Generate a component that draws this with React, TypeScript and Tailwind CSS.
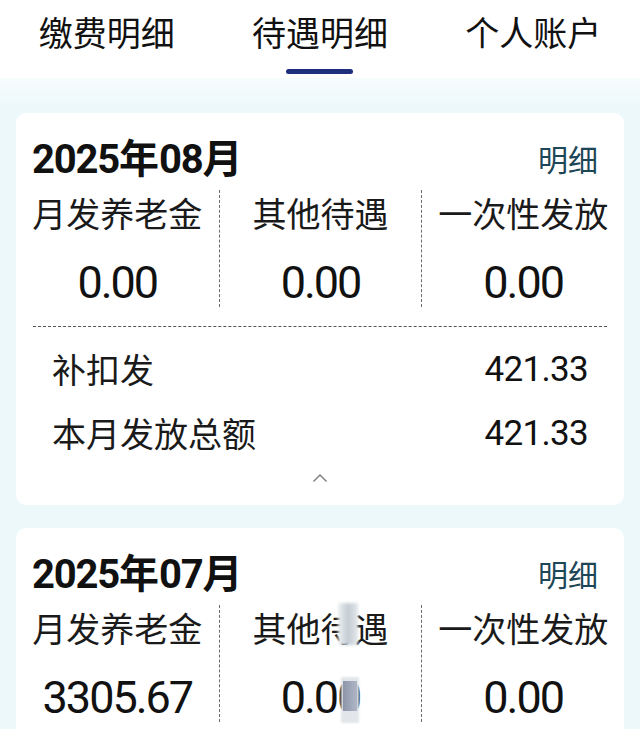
import React from "react";

const cjk = { fontFamily: '"Noto Sans CJK SC", "Noto Sans", sans-serif' };
const num = { fontFamily: 'Roboto, "Noto Sans CJK SC", sans-serif' };

function Chevron() {
  return (
    <svg width="16" height="10" viewBox="0 0 16 10" className="block">
      <polyline points="1.5,8.5 8,2 14.5,8.5" fill="none" stroke="#7a7a7a" strokeWidth="1.4" />
    </svg>
  );
}

type Col = { label: string; value: string };

function Card({
  title,
  cols,
  extra,
  blur,
}: {
  title: string;
  cols: Col[];
  extra?: boolean;
  blur?: boolean;
}) {
  return (
    <div className="mx-[16px] rounded-[10px] bg-white pt-[25px]">
      <div className="flex h-[40px] items-center justify-between pl-[16px] pr-[26px]">
        <span className="text-[40px] font-bold leading-none tracking-[-0.03em] text-[#111]" style={num}>
          2025<span style={cjk} className="tracking-normal">年</span>
          {title}
          <span style={cjk} className="tracking-normal">月</span>
        </span>
        <span className="text-[30px] leading-none text-[#1d4656]" style={cjk}>
          明细
        </span>
      </div>
      <div className="mt-[12px] grid grid-cols-3">
        {cols.map((c, i) => (
          <div
            key={i}
            className={
              "relative flex flex-col items-center " +
              (i > 0 ? "border-l border-dashed border-[#6b6b6b]" : "")
            }
          >
            <div className="mt-[3px] flex h-[40px] items-center text-[34px] leading-none text-[#1a1a1a]" style={cjk}>
              {c.label}
            </div>
            <div className="mt-[24px] flex h-[50px] items-center text-[45px] leading-none tracking-[-0.045em] text-[#111]" style={num}>
              {c.value}
            </div>
            {blur && i === 1 ? (
              <>
                <div className="absolute left-[118px] top-[-2px] h-[42px] w-[20px] bg-[linear-gradient(90deg,#eef1f3,#c3ccd4_50%,#e3e7ea)] blur-[1.5px]" />
                <div className="absolute left-[121px] top-[72px] h-[46px] w-[18px] bg-[#e2e6ea] blur-[1px]" />
                <div className="absolute left-[123px] top-[76px] h-[30px] w-[14px] bg-[linear-gradient(90deg,#8d96a8,#aeb6c6)] blur-[0.6px]" />
              </>
            ) : null}
          </div>
        ))}
      </div>
      {extra ? (
        <>
          <div className="mx-[17px] mt-[19px] border-t border-dashed border-[#555]" />
          <div className="mt-[20px] flex h-[44px] items-center justify-between px-[36px]">
            <span className="text-[34px] leading-none text-[#1a1a1a]" style={cjk}>补扣发</span>
            <span className="text-[35px] leading-none tracking-[-0.02em] text-[#111]" style={num}>421.33</span>
          </div>
          <div className="mt-[20px] flex h-[44px] items-center justify-between px-[36px]">
            <span className="text-[34px] leading-none text-[#1a1a1a]" style={cjk}>本月发放总额</span>
            <span className="text-[35px] leading-none tracking-[-0.02em] text-[#111]" style={num}>421.33</span>
          </div>
          <div className="flex h-[50px] items-center justify-center pb-[4px]">
            <Chevron />
          </div>
        </>
      ) : (
        <div className="h-[20px]" />
      )}
    </div>
  );
}

export default function App() {
  const tabs = ["缴费明细", "待遇明细", "个人账户"];
  return (
    <div className="h-[729px] w-[640px] overflow-hidden bg-[#ecf8fa]" style={cjk}>
      <div className="h-[78px] bg-white">
        <div className="grid grid-cols-3">
          {tabs.map((t, i) => (
            <div key={t} className="flex flex-col items-center">
              <div className="mt-[12px] flex h-[40px] items-center text-[34px] leading-none text-[#111]">
                {t}
              </div>
              {i === 1 ? (
                <div className="mt-[17px] h-[5px] w-[67px] rounded-full bg-[#1f2f7c]" />
              ) : null}
            </div>
          ))}
        </div>
      </div>
      <div className="h-[35px] bg-[linear-gradient(180deg,#f7fcfd,#ecf8fa)]" />
      <div className="flex flex-col gap-[23px]">
        <Card
          title="08"
          extra
          cols={[
            { label: "月发养老金", value: "0.00" },
            { label: "其他待遇", value: "0.00" },
            { label: "一次性发放", value: "0.00" },
          ]}
        />
        <Card
          title="07"
          blur
          cols={[
            { label: "月发养老金", value: "3305.67" },
            { label: "其他待遇", value: "0.00" },
            { label: "一次性发放", value: "0.00" },
          ]}
        />
      </div>
    </div>
  );
}
